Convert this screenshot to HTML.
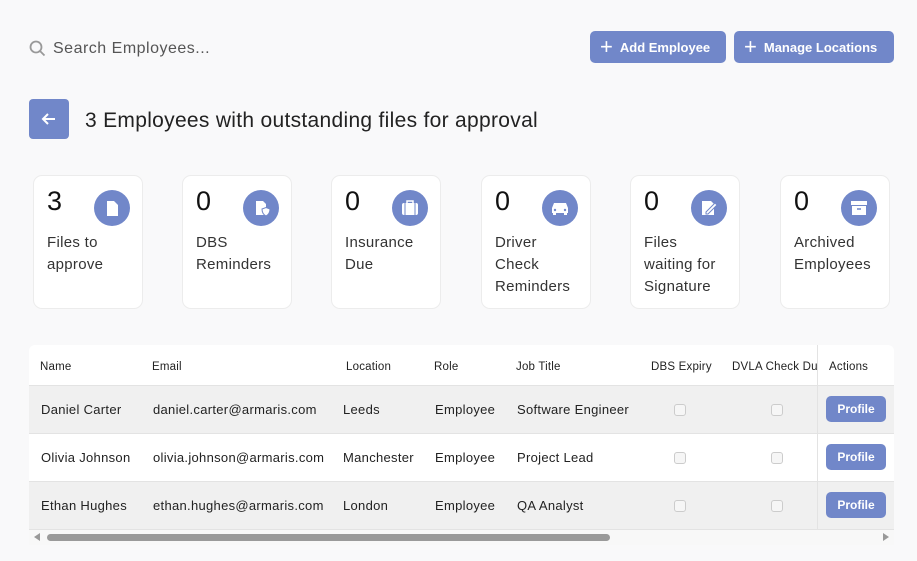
<!DOCTYPE html>
<html><head><style>
*{box-sizing:border-box;margin:0;padding:0}
body{width:917px;height:561px;background:#f9f9fa;font-family:"Liberation Sans",sans-serif;color:#222;position:relative;overflow:hidden;letter-spacing:0.3px}
.abs{position:absolute}
.btn{position:absolute;top:31px;height:32px;background:#7187c9;border-radius:5px;color:#fff;font-size:13px;font-weight:bold;display:flex;align-items:center;padding-left:10px;letter-spacing:0}
.btn span{font-size:22px;font-weight:normal;margin-right:7px;line-height:1}
.card{position:absolute;top:175px;width:110px;height:134px;background:#fff;border:1px solid #ececec;border-radius:9px}
.card .n{position:absolute;left:13px;top:10px;font-size:27px;color:#111}
.card .c{position:absolute;left:60px;top:14px;width:36px;height:36px;border-radius:50%;background:#7187c9}
.card .l{position:absolute;left:13px;top:56px;font-size:15px;line-height:22px;color:#333}
.tbl{position:absolute;left:29px;top:345px;width:865px;height:200px;background:#fff;border-radius:6px 6px 0 0;overflow:hidden;font-size:13px}
.row{position:absolute;left:0;width:865px;height:48px;border-bottom:1px solid #e3e3e3}
.row div{position:absolute;top:16px}
.hd div{position:absolute;top:16px;font-size:11.5px;color:#222;letter-spacing:0.2px}
.cb{position:absolute;width:12px;height:12px;border:1px solid #ccc;border-radius:3px;top:18px!important;background:#f6f6f6}
.pf{left:797px;top:10px!important;width:60px;height:26px;background:#7187c9;border-radius:5px;color:#fff;font-size:12px;font-weight:bold;text-align:center;line-height:26px;letter-spacing:0}
</style></head><body>
<svg class="abs" style="left:29px;top:40px" width="17" height="17" viewBox="0 0 17 17"><circle cx="7" cy="7" r="5.5" fill="none" stroke="#999" stroke-width="1.8"/><line x1="11" y1="11" x2="15.5" y2="15.5" stroke="#999" stroke-width="1.8"/></svg>
<div class="abs" style="left:53px;top:40px;font-size:16px;color:#555;letter-spacing:0.5px">Search Employees...</div>
<div class="btn" style="left:590px;width:136px"><span>+</span>Add Employee</div>
<div class="btn" style="left:734px;width:160px"><span>+</span>Manage Locations</div>
<div class="abs" style="left:29px;top:99px;width:40px;height:40px;background:#7187c9;border-radius:4px"><svg width="40" height="40"><path d="M26 20H14M19 15l-5 5 5 5" stroke="#fff" stroke-width="2" fill="none"/></svg></div>
<div class="abs" style="left:85px;top:109px;font-size:21px;color:#222;letter-spacing:0.3px">3 Employees with outstanding files for approval</div>

<div class="card" style="left:33px"><div class="n">3</div><div class="c"><svg width="36" height="36"><path d="M13 11h7l4 4v11h-11z" fill="#fff"/></svg></div><div class="l">Files to<br>approve</div></div>
<div class="card" style="left:182px"><div class="n">0</div><div class="c"><svg width="36" height="36"><path d="M13 11h7l3 3v11h-10z" fill="#fff"/><path d="M19 19l4-1.5 4 1.5c0 4-2 6-4 7-2-1-4-3-4-7z" fill="#fff" stroke="#7187c9"/></svg></div><div class="l">DBS<br>Reminders</div></div>
<div class="card" style="left:331px"><div class="n">0</div><div class="c"><svg width="36" height="36"><rect x="10" y="13" width="16" height="12" rx="2" fill="#fff"/><path d="M15 13v-2h6v2" stroke="#fff" fill="none" stroke-width="1.5"/><line x1="13" y1="13" x2="13" y2="25" stroke="#7187c9"/><line x1="23" y1="13" x2="23" y2="25" stroke="#7187c9"/></svg></div><div class="l">Insurance<br>Due</div></div>
<div class="card" style="left:481px"><div class="n">0</div><div class="c"><svg width="36" height="36"><path d="M10 18l2-5h12l2 5v5h-16z" fill="#fff"/><rect x="11" y="22" width="3" height="3" fill="#fff"/><rect x="22" y="22" width="3" height="3" fill="#fff"/><circle cx="13" cy="20" r="1.2" fill="#7187c9"/><circle cx="23" cy="20" r="1.2" fill="#7187c9"/></svg></div><div class="l">Driver<br>Check<br>Reminders</div></div>
<div class="card" style="left:630px"><div class="n">0</div><div class="c"><svg width="36" height="36"><path d="M11 11h9l3 3v11h-12z" fill="#fff"/><path d="M15 22l9-9 2 2-9 9h-2z" fill="#fff" stroke="#7187c9"/></svg></div><div class="l">Files<br>waiting for<br>Signature</div></div>
<div class="card" style="left:780px"><div class="n">0</div><div class="c"><svg width="36" height="36"><rect x="10" y="11" width="16" height="4" fill="#fff"/><path d="M11 16h14v9h-14z" fill="#fff"/><line x1="16" y1="19" x2="20" y2="19" stroke="#7187c9" stroke-width="1.5"/></svg></div><div class="l">Archived<br>Employees</div></div>

<div class="tbl">
<div class="row hd" style="top:0;height:41px"><div style="left:11px">Name</div><div style="left:123px">Email</div><div style="left:317px">Location</div><div style="left:405px">Role</div><div style="left:487px">Job Title</div><div style="left:622px">DBS Expiry</div><div style="left:703px;width:85px;overflow:hidden;white-space:nowrap">DVLA Check Due</div><div style="left:800px">Actions</div></div>
<div class="row" style="top:41px;background:#f0f0f0"><div style="left:12px">Daniel Carter</div><div style="left:124px">daniel.carter@armaris.com</div><div style="left:314px">Leeds</div><div style="left:406px">Employee</div><div style="left:488px">Software Engineer</div><div class="cb" style="left:645px"></div><div class="cb" style="left:742px"></div><div class="pf">Profile</div></div>
<div class="row" style="top:89px"><div style="left:12px">Olivia Johnson</div><div style="left:124px">olivia.johnson@armaris.com</div><div style="left:314px">Manchester</div><div style="left:406px">Employee</div><div style="left:488px">Project Lead</div><div class="cb" style="left:645px"></div><div class="cb" style="left:742px"></div><div class="pf">Profile</div></div>
<div class="row" style="top:137px;background:#f0f0f0"><div style="left:12px">Ethan Hughes</div><div style="left:124px">ethan.hughes@armaris.com</div><div style="left:314px">London</div><div style="left:406px">Employee</div><div style="left:488px">QA Analyst</div><div class="cb" style="left:645px"></div><div class="cb" style="left:742px"></div><div class="pf">Profile</div></div>
<div class="abs" style="left:788px;top:0;width:1px;height:185px;background:#e3e3e3"></div>
<div class="abs" style="left:0;top:185px;width:865px;height:15px;background:#f8f8f8"></div>
<div class="abs" style="left:18px;top:189px;width:563px;height:7px;background:#9a9a9a;border-radius:4px"></div>
<svg class="abs" style="left:4px;top:187px" width="8" height="10"><path d="M7 1L1 5l6 4z" fill="#999"/></svg>
<svg class="abs" style="left:853px;top:187px" width="8" height="10"><path d="M1 1l6 4-6 4z" fill="#999"/></svg>
</div>
</body></html>
